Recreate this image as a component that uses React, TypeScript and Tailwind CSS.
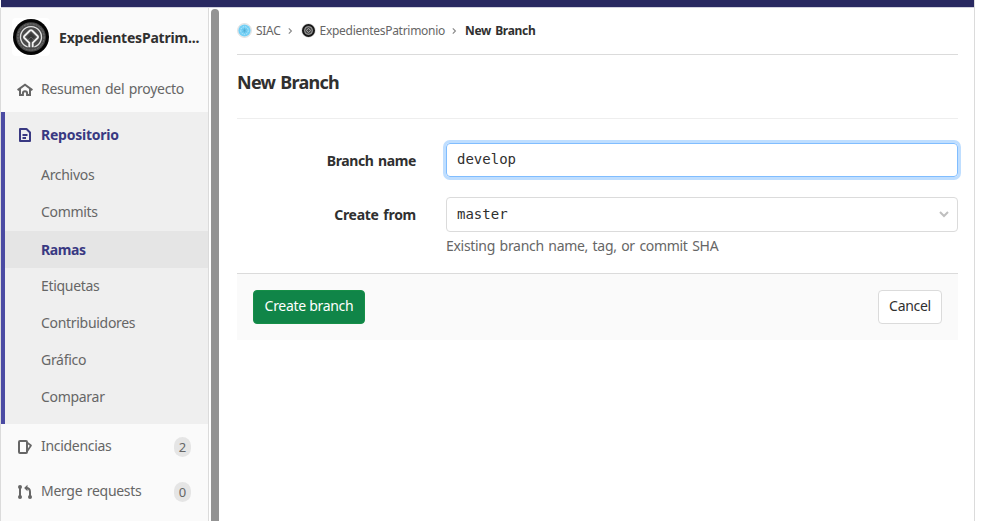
import type { ReactNode } from 'react';

function Emblem({ size }: { size: number }) {
  return (
    <svg width={size} height={size} viewBox="0 0 36 36" fill="none" className="block shrink-0">
      <circle cx="18" cy="18" r="18" fill="#050505" />
      <circle cx="18" cy="18" r="14.8" fill="#4b4b4b" />
      <circle cx="18" cy="18" r="13.1" stroke="#808080" strokeWidth=".8" strokeDasharray="2 1" />
      <path d="M14.7 28A10.5 10.5 0 1 1 21.3 28" stroke="#e2e2e2" strokeWidth="1.3" />
      <path d="M16.3 28.2v-4.4L11.4 19a1.4 1.4 0 0 1 0-2l5.6-5.5a1.4 1.4 0 0 1 2 0l5.6 5.5a1.4 1.4 0 0 1 0 2l-4.9 4.8v4.4" stroke="#f0f0f0" strokeWidth="1.9" />
      <path d="m18 14 4 4-4 4-4-4z" fill="#383838" />
      <path d="m15 21 3-3 3 3" stroke="#777" strokeWidth=".6" />
    </svg>
  );
}

function GroupAvatar() {
  return (
    <svg width="15" height="15" viewBox="0 0 15 15" fill="none" className="mb-[2px] block shrink-0">
      <circle cx="7.5" cy="7.5" r="7" fill="#e9edef" stroke="#d9d9d9" strokeWidth=".7" />
      <circle cx="7.5" cy="7.5" r="6.1" fill="#72cff5" />
      <circle cx="7.5" cy="7.5" r="3.8" stroke="#c5ecfb" strokeWidth="1" strokeDasharray="1.4 1.2" />
      <path d="M7.5 5.3v4.4M5.6 6.4l3.8 2.2M9.4 6.4 5.6 8.6" stroke="#4fa9d0" strokeWidth=".7" />
    </svg>
  );
}

function ProjectAvatar() {
  return (
    <svg width="15" height="15" viewBox="0 0 15 15" fill="none" className="mb-[2px] block shrink-0">
      <circle cx="7.5" cy="7.5" r="7.2" fill="#ddd" />
      <circle cx="7.5" cy="7.5" r="5.6" fill="#4a4a4a" stroke="#171717" strokeWidth="1.8" />
      <circle cx="7.5" cy="7.5" r="3.9" stroke="#b5b5b5" strokeWidth=".8" />
      <path d="m7.5 5.4 2.1 2.1-2.1 2.1-2.1-2.1z" stroke="#bbb" strokeWidth=".8" />
    </svg>
  );
}

function HomeIcon() {
  return (
    <svg width="16" height="16" viewBox="0 0 16 16" fill="none" stroke="#666" strokeWidth="2">
      <path d="M.6 8.1 8 2.8l7.4 5.3M3 7v6h2.9v-1.6a2.1 2.1 0 0 1 4.2 0V13H13V7" />
    </svg>
  );
}

function DocIcon() {
  return (
    <svg width="16" height="16" viewBox="0 0 16 16" fill="none" stroke="#393982" strokeWidth="2">
      <path d="M3 2h6.5L13 5.5V14H3z" strokeLinejoin="round" />
      <path d="M5.5 8h5M5.5 11h3.5" strokeWidth="1.8" />
    </svg>
  );
}

function IssuesIcon() {
  return (
    <svg width="16" height="16" viewBox="0 0 16 16" fill="none" stroke="#666" strokeWidth="2" strokeLinejoin="round">
      <path d="M3 2h6q1 0 1 1v10q0 1-1 1H3q-1 0-1-1V3q0-1 1-1z" />
      <path d="m10 3.5 4 3-4 6" strokeWidth="1.7" />
    </svg>
  );
}

function MergeIcon() {
  return (
    <svg width="16" height="16" viewBox="0 0 16 16" fill="none" stroke="#666" strokeWidth="2">
      <path d="M3 3v10M13 13V8c0-2.8-1.2-4-3.8-4" />
      <g fill="#666" stroke="none">
        <circle cx="3" cy="3" r="2" />
        <circle cx="3" cy="13" r="2" />
        <circle cx="13" cy="13" r="2" />
        <path d="M10.5.8v6.4L7.1 4z" />
      </g>
    </svg>
  );
}

function Chevron() {
  return (
    <svg width="5" height="8" viewBox="0 0 5 8" fill="none" stroke="#8b8b8b" strokeWidth="1.2">
      <path d="m.8 1.4 2.6 2.6L.8 6.6" />
    </svg>
  );
}

function NavRow({ icon, count, children }: { icon: ReactNode; count?: string; children: ReactNode }) {
  return (
    <div className="flex h-[45px] items-center pl-4 pr-[17px] text-[#666]">
      {icon}
      <span className="mb-[2px] ml-2 whitespace-nowrap">{children}</span>
      {count && (
        <span className="ml-auto mt-px flex h-5 w-[17px] items-center justify-center rounded-full bg-[#e5e5e5] text-[13px] tracking-normal">
          {count}
        </span>
      )}
    </div>
  );
}

const sections = ['Archivos', 'Commits', 'Ramas', 'Etiquetas', 'Contribuidores', 'Gráfico', 'Comparar'];

export default function App() {
  return (
    <div className="h-[521px] w-[986px] overflow-hidden bg-white pl-px font-['Noto_Sans',sans-serif] text-sm tracking-[-0.3px] text-[#303030] [word-spacing:1.2px]">
      <div className="flex h-full w-[974px] flex-col border-r border-[#dbdbdb]">
        <header className="h-2 shrink-0 border-b border-[#d3d2df] bg-[#292961]" />
        <div className="flex min-h-0 flex-1">
          <aside className="-ml-px w-[209px] shrink-0 overflow-hidden border-x border-[#dbdbdb] bg-[#fafafa]">
            <div className="flex h-[59px] items-center pl-[11px]">
              <div className="mb-[2px] rounded-sm bg-white p-px">
                <Emblem size={36} />
              </div>
              <strong className="ml-[9px] mt-px whitespace-nowrap tracking-[-0.2px]">ExpedientesPatrim...</strong>
            </div>
            <NavRow icon={<HomeIcon />}>Resumen del proyecto</NavRow>
            <div className="h-[312px] border-l-4 border-[#4b4ba3] bg-[#efefef]">
              <div className="flex h-[45px] items-center pl-3 font-bold tracking-[-0.23px] text-[#393982]">
                <DocIcon />
                <span className="ml-2">Repositorio</span>
              </div>
              {sections.map((name) => (
                <div
                  key={name}
                  className={
                    name === 'Ramas'
                      ? 'flex h-[37px] items-center bg-[#e5e5e5] pl-9 font-bold tracking-[-0.4px] text-[#393982]'
                      : 'flex h-[37px] items-center pb-[2px] pl-9 text-[#666]'
                  }
                >
                  {name}
                </div>
              ))}
            </div>
            <NavRow icon={<IssuesIcon />} count="2">Incidencias</NavRow>
            <NavRow icon={<MergeIcon />} count="0">Merge requests</NavRow>
          </aside>
          <div className="ml-[2px] mt-px w-2 shrink-0 rounded-t-full bg-[#939393]" />
          <main className="ml-[18px] w-[721px]">
            <nav className="flex h-[47px] items-center border-b border-[#dbdbdb] text-xs tracking-[-0.28px] text-[#666]">
              <GroupAvatar />
              <span className="ml-1 mr-[7px]">SIAC</span>
              <Chevron />
              <span className="ml-2"><ProjectAvatar /></span>
              <span className="ml-1 mr-[7px]">ExpedientesPatrimonio</span>
              <Chevron />
              <strong className="ml-2 text-[#303030]">New Branch</strong>
            </nav>
            <h1 className="flex h-16 items-center border-b border-[#eee] pb-[10px] text-lg font-bold tracking-[-0.75px]">New Branch</h1>
            <form className="pt-6">
              <div className="flex h-[34px] items-center">
                <label className="mt-[2px] w-[179px] text-right font-bold tracking-[-0.38px]">Branch name</label>
                <div className="ml-[30px] flex h-[34px] w-[512px] items-center rounded-[4px] border border-[#80bdff] pb-[2px] pl-[10px] font-['DejaVu_Sans_Mono',monospace] tracking-normal shadow-[0_0_0_3px_#bfdeff]">
                  develop
                </div>
              </div>
              <div className="mt-5 flex h-[35px] items-center">
                <label className="w-[179px] text-right font-bold tracking-[-0.27px]">Create from</label>
                <div className="ml-[30px] flex h-[35px] w-[512px] items-center justify-between rounded-[4px] border border-[#dbdbdb] pl-[10px] pr-2 font-['DejaVu_Sans_Mono',monospace] tracking-normal">
                  <span className="mb-[2px]">master</span>
                  <svg width="10" height="7" viewBox="0 0 10 7" fill="none" stroke="#bfbfbf" strokeWidth="2">
                    <path d="m1 1 4 4 4-4" />
                  </svg>
                </div>
              </div>
              <p className="ml-[209px] mt-1 h-[37px] text-[#666]">Existing branch name, tag, or commit SHA</p>
              <div className="flex h-[67px] items-center justify-between border-t border-[#dbdbdb] bg-[#fafafa] px-4">
                <button className="h-[34px] w-[112px] rounded-[4px] border border-[#168f48] bg-[#108548] pb-[2px] text-white">Create branch</button>
                <button className="h-[34px] w-16 rounded-[4px] border border-[#dbdbdb] bg-white pb-[2px]">Cancel</button>
              </div>
            </form>
          </main>
        </div>
      </div>
    </div>
  );
}
